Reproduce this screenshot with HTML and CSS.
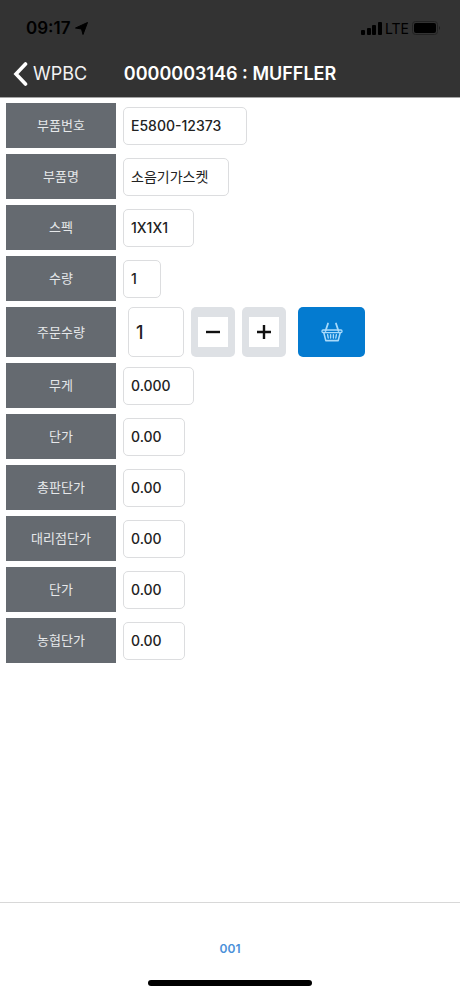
FILE: index.html
```html
<!DOCTYPE html>
<html lang="ko">
<head>
    <meta charset="UTF-8">
    <meta name="viewport" content="width=device-width, initial-scale=1.0">
    <title>0000003146 : MUFFLER</title>
    <link rel="stylesheet" href="styles.css">
</head>
<body>
    <header class="header">
        <div class="status-bar">
            <div class="status-left">
                <span class="clock">09:17</span>
                <svg width="13" height="13" viewBox="0 0 13 13"><path d="M12.5 0.5 L8 12.5 L6.5 7 L0.5 6 Z" stroke="#000" stroke-linejoin="round"/></svg>
            </div>
            <div class="status-right">
                <svg width="21" height="13" viewBox="0 0 21 13">
                    <rect x="0" y="8" width="4" height="5" rx="1"/>
                    <rect x="6" y="6" width="4" height="7" rx="1"/>
                    <rect x="11" y="3" width="4" height="10" rx="1"/>
                    <rect x="17" y="0" width="4" height="13" rx="1"/>
                </svg>
                <span class="network">LTE</span>
                <svg class="battery" width="29" height="14" viewBox="0 0 29 14">
                    <rect x="0.5" y="0.5" width="25" height="13" rx="3" fill="none" stroke="#222"/>
                    <rect x="2" y="2" width="22" height="10" rx="2"/>
                    <path d="M27 5 Q29 7 27 9 Z" fill="#1c1c1c"/>
                </svg>
            </div>
        </div>
        <nav class="nav-bar">
            <a href="#" class="back">
                <svg width="15" height="24" viewBox="0 0 15 24"><path d="M12.5 2 L3 12 L12.5 22" fill="none" stroke="#fff" stroke-width="3.6" stroke-linecap="round"/></svg>
                WPBC
            </a>
            <h1>0000003146 : MUFFLER</h1>
        </nav>
    </header>

    <main class="details">
        <div class="row">
            <label for="partNo">부품번호</label>
            <input type="text" id="partNo" class="value w-number" value="E5800-12373" readonly>
        </div>
        <div class="row">
            <label for="partName">부품명</label>
            <input type="text" id="partName" class="value w-name" value="소음기가스켓" readonly>
        </div>
        <div class="row">
            <label for="spec">스펙</label>
            <input type="text" id="spec" class="value w-medium" value="1X1X1" readonly>
        </div>
        <div class="row">
            <label for="stock">수량</label>
            <input type="text" id="stock" class="value w-tiny" value="1" readonly>
        </div>
        <div class="row order">
            <label for="orderQty">주문수량</label>
            <div class="order-controls">
                <input type="text" id="orderQty" class="quantity" value="1" inputmode="numeric">
                <button type="button" class="step" id="minus" aria-label="-">
                    <svg width="30" height="30" viewBox="0 0 30 30"><path d="M8 15 H22"/></svg>
                </button>
                <button type="button" class="step" id="plus" aria-label="+">
                    <svg width="30" height="30" viewBox="0 0 30 30"><path d="M8 15 H22 M15 8 V22"/></svg>
                </button>
                <button type="button" class="basket" aria-label="장바구니">
                    <svg width="22" height="20" viewBox="0 0 22 20" fill="none" stroke="#a9dafa" stroke-linecap="round" stroke-linejoin="round">
                        <path d="M7 1.5 L4.5 9 M15 1.5 L17.5 9" stroke-width="1.8"/>
                        <rect x="1" y="8" width="20" height="2.6" rx="1" stroke-width="1.3"/>
                        <path d="M2.8 10.6 L4.8 18.6 H17.2 L19.2 10.6" stroke-width="1.6"/>
                        <path d="M6.6 12.6 L7.2 16 M9.6 12.6 V16 M12.4 12.6 V16 M15.4 12.6 L14.8 16" stroke-width="1.4"/>
                    </svg>
                </button>
            </div>
        </div>
        <div class="row">
            <label for="weight">무게</label>
            <input type="text" id="weight" class="value w-medium" value="0.000" readonly>
        </div>
        <div class="row">
            <label for="price">단가</label>
            <input type="text" id="price" class="value w-small" value="0.00" readonly>
        </div>
        <div class="row">
            <label for="distPrice">총판단가</label>
            <input type="text" id="distPrice" class="value w-small" value="0.00" readonly>
        </div>
        <div class="row">
            <label for="agencyPrice">대리점단가</label>
            <input type="text" id="agencyPrice" class="value w-small" value="0.00" readonly>
        </div>
        <div class="row">
            <label for="unitPrice">단가</label>
            <input type="text" id="unitPrice" class="value w-small" value="0.00" readonly>
        </div>
        <div class="row">
            <label for="coopPrice">농협단가</label>
            <input type="text" id="coopPrice" class="value w-small" value="0.00" readonly>
        </div>
    </main>

    <footer class="footer">
        <a href="#" class="tab">001</a>
        <div class="home-bar"></div>
    </footer>

    <script>
        const orderQty = document.getElementById('orderQty');

        function changeQty(step) {
            const current = parseInt(orderQty.value, 10) || 0;
            orderQty.value = Math.max(1, current + step);
        }

        document.getElementById('minus').addEventListener('click', () => changeQty(-1));
        document.getElementById('plus').addEventListener('click', () => changeQty(1));
    </script>
</body>
</html>
```

FILE: styles.css
```css
:root {
    --header-color: #333333;
    --label-color: #656a70;
    --border-color: #dcdddf;
    --primary-color: #047bd0;
}

* {
    margin: 0;
    padding: 0;
    box-sizing: border-box;
}

body {
    font-family: Inter, "Noto Sans CJK KR", sans-serif;
    min-height: 100vh;
    display: flex;
    flex-direction: column;
    background-color: #ffffff;
    color: #222222;
}

svg {
    display: block;
}

a {
    text-decoration: none;
}

.header {
    background-color: var(--header-color);
    border-bottom: 1px solid #a5a5a5;
}

.status-bar {
    display: flex;
    justify-content: space-between;
    align-items: center;
    height: 50px;
    padding: 6px 19px 0 26px;
    color: #000000;
}

.status-left,
.status-right {
    display: flex;
    align-items: center;
    gap: 4px;
}

.status-right {
    gap: 3px;
}

.clock {
    font-size: 17px;
    font-weight: 600;
}

.network {
    font-size: 14px;
}

.nav-bar {
    display: grid;
    grid-template-columns: 1fr auto 1fr;
    align-items: center;
    height: 47px;
    padding: 0 13px;
}

.back {
    display: flex;
    align-items: center;
    gap: 5px;
    color: #f2f2f2;
    font-size: 18px;
}

h1 {
    color: #ffffff;
    font-size: 18px;
    font-weight: 600;
}

.details {
    flex: 1;
    display: flex;
    flex-direction: column;
    gap: 6px;
    padding: 5px 6px;
}

.row {
    display: flex;
    align-items: center;
    gap: 7px;
    height: 45px;
}

.row.order {
    height: 50px;
}

.row label {
    display: flex;
    align-items: center;
    justify-content: center;
    width: 110px;
    height: 100%;
    padding-bottom: 2px;
    background-color: var(--label-color);
    color: #e6e8ea;
    font-size: 13px;
}

.value,
.quantity {
    border: 1px solid var(--border-color);
    border-radius: 5px;
    background-color: #ffffff;
    color: #222222;
    font-family: inherit;
    font-weight: 500;
    padding: 0 7px;
}

.value {
    height: 38px;
    font-size: 14px;
}

.w-number {
    width: 124px;
}

.w-name {
    width: 106px;
    padding-bottom: 2px;
    font-weight: 400;
}

.w-medium {
    width: 71px;
}

.w-small {
    width: 62px;
}

.w-tiny {
    width: 38px;
}

.order-controls {
    display: flex;
    gap: 7px;
    height: 100%;
    padding-left: 5px;
}

.quantity {
    width: 56px;
    font-size: 18px;
}

.step,
.basket {
    display: flex;
    align-items: center;
    justify-content: center;
    border: none;
    border-radius: 5px;
    cursor: pointer;
}

.step {
    width: 44px;
    background-color: #dee1e5;
}

.step svg {
    background-color: #ffffff;
    fill: none;
    stroke: #111111;
    stroke-width: 2.4;
}

.basket {
    width: 67px;
    margin-left: 5px;
    background-color: var(--primary-color);
}

.footer {
    display: flex;
    flex-direction: column;
    align-items: center;
    justify-content: space-between;
    height: 94px;
    padding: 38px 0 10px;
    border-top: 1px solid #d8d8d8;
}

.tab {
    color: #4a90d9;
    font-size: 12px;
    font-weight: 600;
}

.home-bar {
    width: 164px;
    height: 6px;
    border-radius: 3px;
    background-color: #000000;
}
```
